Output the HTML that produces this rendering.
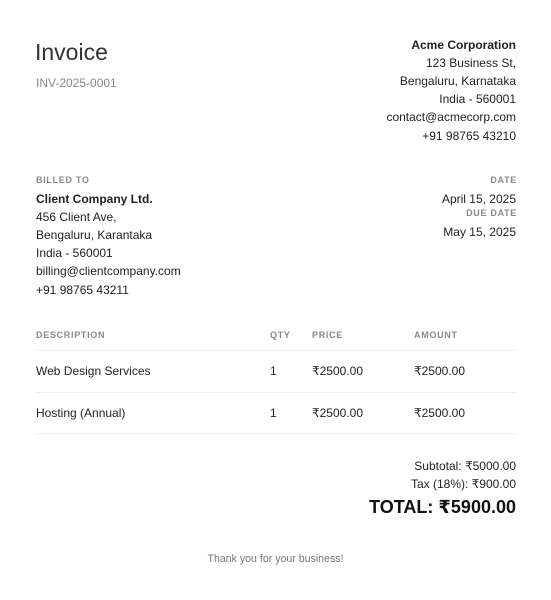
<!DOCTYPE html>
<html><head><meta charset="utf-8"><style>
*{margin:0;padding:0;box-sizing:border-box}
body{width:551px;height:600px;background:#fff;font-family:"Liberation Sans","DejaVu Sans",sans-serif;color:#222;font-size:12px;position:relative;overflow:hidden}
.a{position:absolute;line-height:18px;white-space:nowrap}
.r{right:35px;text-align:right}
.lbl{font-size:9px;font-weight:bold;letter-spacing:0.7px;color:#888}
.hr{position:absolute;left:36px;width:480px;height:1px;background:#eee}
</style></head><body>
<div class="a" style="left:35px;top:37px;font-size:23px;line-height:30px;color:#333">Invoice</div>
<div class="a" style="left:36px;top:74px;font-size:12px;color:#888">INV-2025-0001</div>

<div class="a r" style="top:36px;font-weight:bold">Acme Corporation</div>
<div class="a r" style="top:54px">123 Business St,</div>
<div class="a r" style="top:72px">Bengaluru, Karnataka</div>
<div class="a r" style="top:90px">India - 560001</div>
<div class="a r" style="top:108px">contact@acmecorp.com</div>
<div class="a r" style="top:127px">+91 98765 43210</div>

<div class="a lbl" style="left:36px;top:171px">BILLED TO</div>
<div class="a" style="left:36px;top:190px;font-weight:bold">Client Company Ltd.</div>
<div class="a" style="left:36px;top:208px">456 Client Ave,</div>
<div class="a" style="left:36px;top:226px">Bengaluru, Karantaka</div>
<div class="a" style="left:36px;top:244px">India - 560001</div>
<div class="a" style="left:36px;top:262px">billing@clientcompany.com</div>
<div class="a" style="left:36px;top:281px">+91 98765 43211</div>

<div class="a lbl r" style="top:171px;right:34px">DATE</div>
<div class="a r" style="top:190px">April 15, 2025</div>
<div class="a lbl r" style="top:204px;right:34px">DUE DATE</div>
<div class="a r" style="top:223px">May 15, 2025</div>

<div class="a lbl" style="left:36px;top:326px">DESCRIPTION</div>
<div class="a lbl" style="left:270px;top:326px">QTY</div>
<div class="a lbl" style="left:312px;top:326px">PRICE</div>
<div class="a lbl" style="left:414px;top:326px">AMOUNT</div>
<div class="hr" style="top:350px"></div>
<div class="a" style="left:36px;top:362px">Web Design Services</div>
<div class="a" style="left:270px;top:362px">1</div>
<div class="a" style="left:312px;top:362px">₹2500.00</div>
<div class="a" style="left:414px;top:362px">₹2500.00</div>
<div class="hr" style="top:392px"></div>
<div class="a" style="left:36px;top:404px">Hosting (Annual)</div>
<div class="a" style="left:270px;top:404px">1</div>
<div class="a" style="left:312px;top:404px">₹2500.00</div>
<div class="a" style="left:414px;top:404px">₹2500.00</div>
<div class="hr" style="top:433px"></div>

<div class="a r" style="top:457px">Subtotal: ₹5000.00</div>
<div class="a r" style="top:475px">Tax (18%): ₹900.00</div>
<div class="a r" style="top:495px;font-size:18px;line-height:24px;font-weight:bold;color:#111">TOTAL: ₹5900.00</div>

<div class="a" style="left:0;width:551px;text-align:center;top:550px;font-size:10.6px;color:#777">Thank you for your business!</div>
</body></html>
